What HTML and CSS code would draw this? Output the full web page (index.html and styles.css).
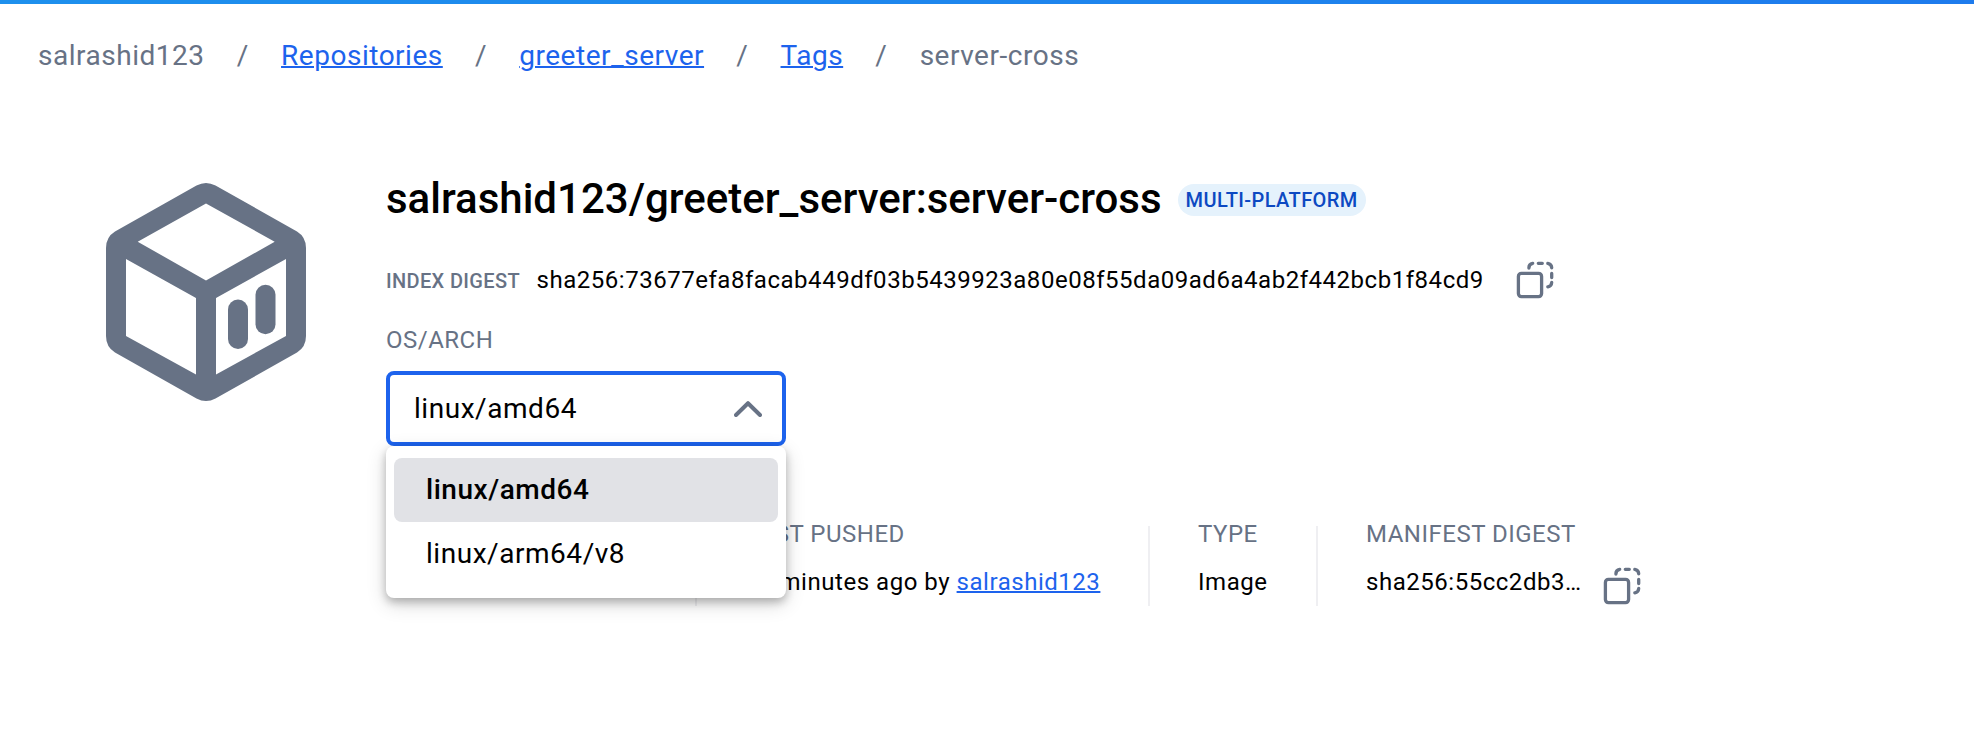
FILE: index.html
```html
<!DOCTYPE html>
<html lang="en">
<head>
<meta charset="utf-8">
<title>salrashid123/greeter_server:server-cross</title>
<link rel="stylesheet" href="styles.css">
</head>
<body>
<div class="topbar"></div>
<nav class="breadcrumbs">
  <span>salrashid123</span><span class="sep">/</span><a href="#">Repositories</a><span class="sep">/</span><a href="#">greeter_server</a><span class="sep">/</span><a href="#">Tags</a><span class="sep">/</span><span>server-cross</span>
</nav>
<main class="image">
  <svg class="cube" viewBox="106 183 200 218" fill="#677285">
    <path fill-rule="evenodd" d="M196.500 185.500Q206 180.500 215.500 185.500L297 231.500Q306 237 306 248V336Q306 347 297 352.500L215.500 398.500Q206 403.500 196.500 398.500L115 352.500Q106 347 106 336V248Q106 237 115 231.500ZM206 203.500L137.700 241.700L206 280.500L274.700 241.700ZM126 259V336L196 374.500V298ZM286 259L216 298V374.500L286 336Z"/>
    <rect x="228" y="299.500" width="20" height="49.500" rx="10"/>
    <rect x="255.500" y="284.700" width="20" height="49.500" rx="10"/>
  </svg>
  <div class="details">
    <div class="heading">
      <h1>salrashid123/greeter_server:server-cross</h1>
      <span class="badge">MULTI-PLATFORM</span>
    </div>
    <div class="digest">
      <span class="digest-label">INDEX DIGEST</span>
      <span class="digest-value">sha256:73677efa8facab449df03b5439923a80e08f55da09ad6a4ab2f442bcb1f84cd9</span>
      <svg class="copy" viewBox="0 0 38 38"><rect x="2.400" y="12.400" width="23.200" height="23.200" rx="3"/><path d="M12.900 7a4.600 4.600 0 0 1 3.800-4.600M22.300 2.300h4M31.800 2.400a4.600 4.600 0 0 1 3.900 4.400M35.700 12.500v4M35.700 21.500a4.600 4.600 0 0 1-3.900 4.300"/></svg>
    </div>
    <div class="label">OS/ARCH</div>
    <div class="select">
      <div class="select-box">
        <span>linux/amd64</span>
        <svg class="chevron" viewBox="0 0 28 16"><path d="M2 14L14 2.200L26 14"/></svg>
      </div>
      <div class="menu">
        <div class="option selected">linux/amd64</div>
        <div class="option">linux/arm64/v8</div>
      </div>
    </div>
    <div class="stats">
      <div class="stat stat-size"></div>
      <div class="stat stat-pushed"><div class="label">LAST PUSHED</div><div class="value">15 minutes ago by <a href="#">salrashid123</a></div></div>
      <div class="stat stat-type"><div class="label">TYPE</div><div class="value">Image</div></div>
      <div class="stat"><div class="label">MANIFEST DIGEST</div><div class="value manifest"><span>sha256:55cc2db3…</span>
        <svg class="copy" viewBox="0 0 38 38"><rect x="2.400" y="12.400" width="23.200" height="23.200" rx="3"/><path d="M12.900 7a4.600 4.600 0 0 1 3.800-4.600M22.300 2.300h4M31.800 2.400a4.600 4.600 0 0 1 3.900 4.400M35.700 12.500v4M35.700 21.500a4.600 4.600 0 0 1-3.900 4.300"/></svg></div></div>
    </div>
  </div>
</main>
</body>
</html>
```
FILE: styles.css
```css
* { box-sizing: border-box; }
body {
  margin: 0;
  height: 736px;
  overflow: hidden;
  background: #fff;
  color: #000;
  font-family: Roboto, sans-serif;
}
a {
  color: #1d63ed;
  text-decoration: underline;
  text-decoration-thickness: 1.5px;
}
svg { display: block; flex: none; }
.topbar {
  height: 4px;
  background: linear-gradient(90deg, #1d90ed, #1d7bed);
}
.breadcrumbs {
  display: flex;
  padding: 32px 38px 0;
  height: 68px;
  font-size: 28px;
  line-height: 40px;
  letter-spacing: 0.52px;
  color: #677285;
}
.sep { margin: 0 32.2px; }
.image {
  display: flex;
  padding: 111px 0 0 106px;
}
.cube { width: 200px; height: 218px; }
.details { margin-left: 80px; }
.heading {
  display: flex;
  align-items: center;
  height: 34px;
  white-space: nowrap;
}
h1 {
  margin: 0;
  padding-bottom: 2px;
  font-size: 42px;
  font-weight: 500;
  line-height: 48px;
}
.badge {
  height: 32px;
  margin-left: 16px;
  padding: 0 8px;
  border-radius: 16px;
  background: #e5f2fc;
  color: #0c49c2;
  font-size: 20px;
  font-weight: 500;
  line-height: 32px;
  letter-spacing: 0.4px;
}
.digest {
  display: flex;
  align-items: center;
  height: 40px;
  margin-top: 43px;
}
.digest-label {
  width: 150.5px;
  font-size: 20px;
  font-weight: 500;
  line-height: 28px;
  letter-spacing: 0.35px;
  padding-top: 1px;
  color: #677285;
}
.digest-value {
  width: 979.5px;
  font-size: 24px;
  letter-spacing: 0.53px;
}
.copy {
  width: 38px;
  height: 38px;
  fill: none;
  stroke: #677285;
  stroke-width: 3.3;
  stroke-linecap: round;
}
.label {
  font-size: 24px;
  line-height: 32px;
  letter-spacing: 0.5px;
  color: #677285;
  white-space: nowrap;
}
.digest + .label { margin-top: 24px; }
.select { position: relative; margin-top: 15px; width: 400px; }
.select-box {
  display: flex;
  align-items: center;
  justify-content: space-between;
  height: 75px;
  padding: 0 20px 0 24px;
  border: 4px solid #1d63ed;
  border-radius: 8px;
  font-size: 28px;
  letter-spacing: 0.54px;
}
.chevron {
  width: 28px;
  height: 16px;
  fill: none;
  stroke: #677285;
  stroke-width: 4;
  stroke-linecap: round;
  stroke-linejoin: round;
}
.menu {
  position: absolute;
  top: 75px;
  left: 0;
  width: 400px;
  height: 152px;
  padding: 12px 8px;
  border-radius: 8px;
  background: #fff;
  box-shadow: 0 4px 8px rgba(0,0,0,.24), 0 6px 20px rgba(0,0,0,.16);
}
.option {
  height: 64px;
  padding-left: 32px;
  border-radius: 8px;
  font-size: 28px;
  line-height: 64px;
  letter-spacing: 0.54px;
}
.selected { background: #e1e2e6; font-weight: 500; }
.stats { display: flex; margin-top: 80px; }
.stat { height: 80px; padding-right: 48px; margin-right: 48px; border-right: 2px solid #efeff2; }
.stat:last-child { border: 0; margin: 0; padding: 0; }
.stat-size { width: 311px; }
.stat-pushed { width: 405px; }
.stat-type { width: 120px; }
.stat .label { margin-top: -8px; }
.value {
  height: 48px;
  font-size: 24px;
  line-height: 32px;
  padding-top: 16px;
  letter-spacing: 0.53px;
  white-space: nowrap;
}
.manifest { display: flex; }
.manifest span { width: 237px; }
.manifest .copy { margin-top: 1px; }
```
